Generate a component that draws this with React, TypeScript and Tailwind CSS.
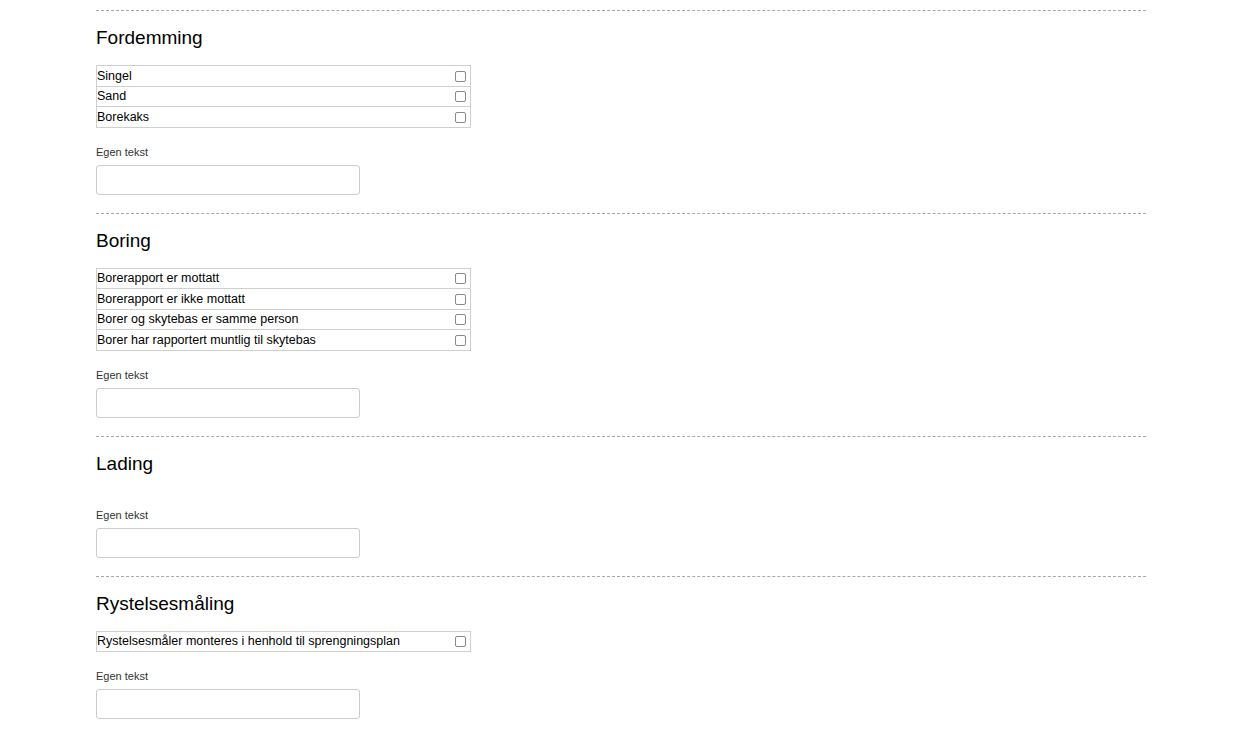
const sections: { title: string; options: string[] }[] = [
  { title: "Fordemming", options: ["Singel", "Sand", "Borekaks"] },
  {
    title: "Boring",
    options: [
      "Borerapport er mottatt",
      "Borerapport er ikke mottatt",
      "Borer og skytebas er samme person",
      "Borer har rapportert muntlig til skytebas",
    ],
  },
  { title: "Lading", options: [] },
  {
    title: "Rystelsesmåling",
    options: ["Rystelsesmåler monteres i henhold til sprengningsplan"],
  },
];

function Section({ title, options }: { title: string; options: string[] }) {
  return (
    <section className="flex flex-col items-start border-t border-dashed border-[#a8a8a8] pt-[16px] pb-[18px]">
      <h2 className="h-[22px] text-[19px] leading-[22px] text-black mb-[16px]">{title}</h2>
      {options.length > 0 && (
        <div className="w-[375px] border-t border-x border-[#cfcfcf]">
          {options.map((opt) => (
            <label
              key={opt}
              className="flex items-center justify-between h-[20.5px] border-b border-[#cfcfcf] pl-0 pr-[4px] pt-[1px] text-[12.5px] text-black"
            >
              <span>{opt}</span>
              <input
                type="checkbox"
                className="appearance-none w-[11px] h-[11px] border border-[#8a8a8a] rounded-[2px] bg-white"
              />
            </label>
          ))}
        </div>
      )}
      <div className="mt-[18px] text-[11px] leading-[13px] text-[#333]">Egen tekst</div>
      <input
        type="text"
        className="block mt-[6px] w-[264px] h-[30px] border border-[#cccccc] rounded-[3px] bg-white"
      />
    </section>
  );
}

export default function App() {
  return (
    <div className="min-h-screen bg-white font-['Liberation_Sans',Arial,sans-serif]">
      <div className="ml-[96px] w-[1050px] pt-[10px]">
        {sections.map((s) => (
          <Section key={s.title} title={s.title} options={s.options} />
        ))}
      </div>
    </div>
  );
}
